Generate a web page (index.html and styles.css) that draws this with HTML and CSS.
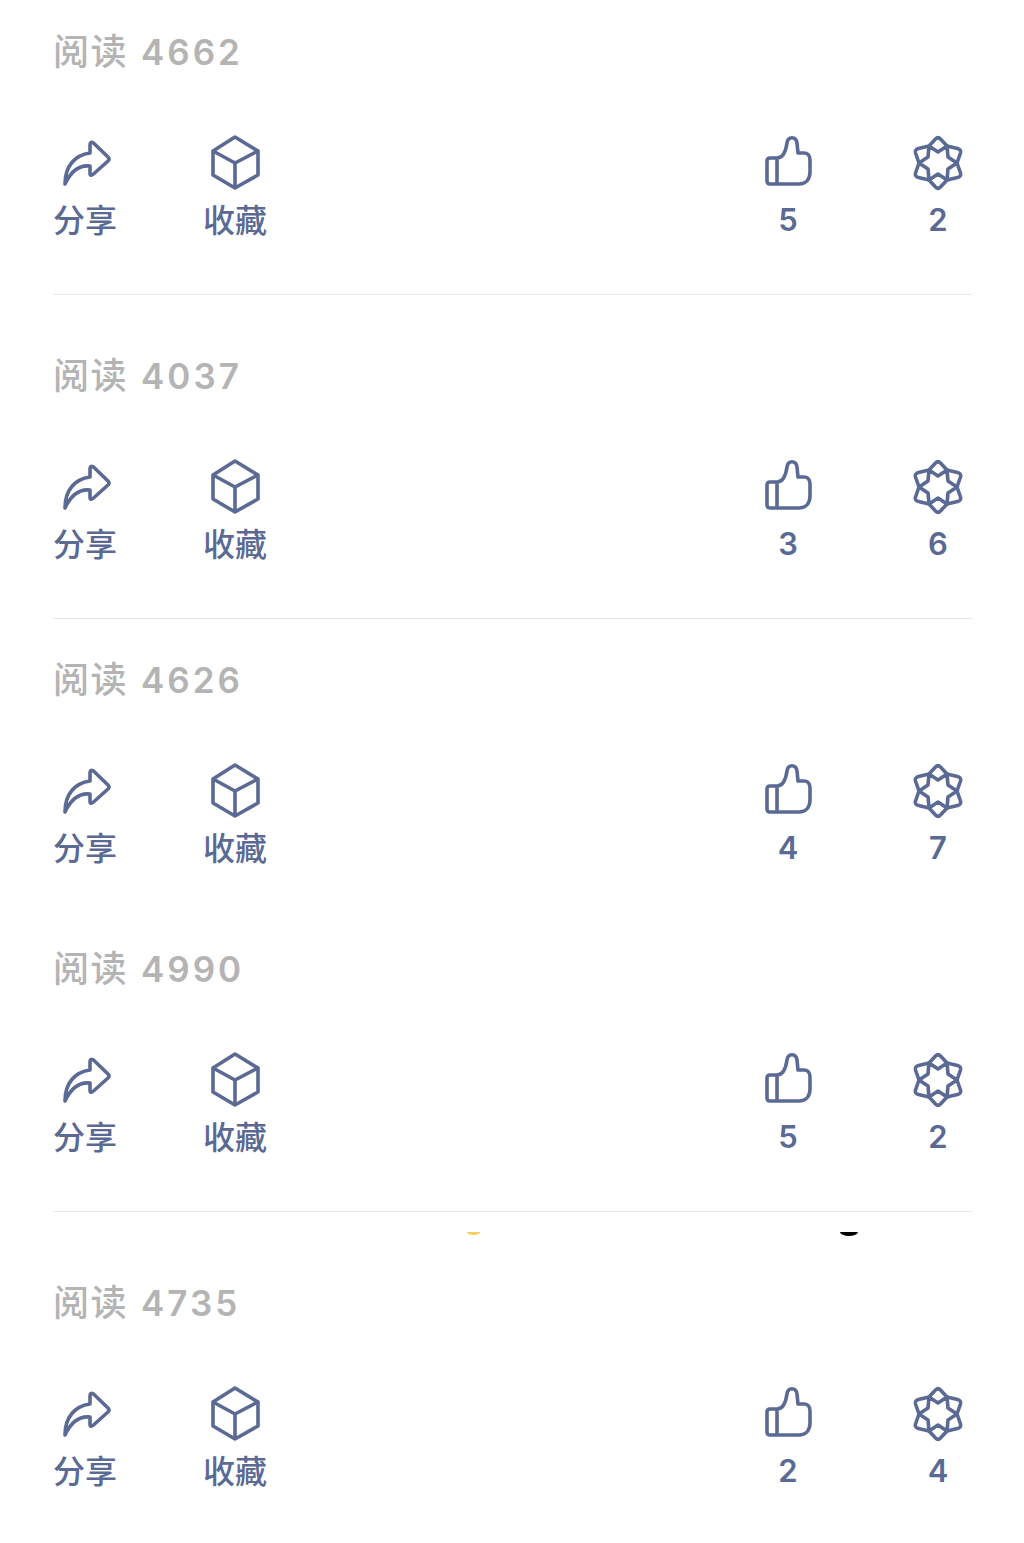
FILE: index.html

```html
<!DOCTYPE html>
<html lang="zh-CN">
<head>
    <meta charset="UTF-8">
    <title>阅读列表</title>
    <link rel="stylesheet" href="styles.css">
</head>
<body>

<svg class="defs" width="0" height="0">
    <defs>
        <symbol id="i-share" viewBox="0 0 60 60">
            <path d="M10 51C10 33 20 22 35 20L35 12Q35 8 38.5 10L53 24Q55 26 53 28L38.5 41Q35 44 35 40L35 33C25 32 16 38 10 51Z"/>
        </symbol>
        <symbol id="i-box" viewBox="0 0 60 60">
            <path d="M30 4L53 18V42L30 55L8 42V18ZM8 18L30 30L53 18M30 30V55"/>
        </symbol>
        <symbol id="i-thumb" viewBox="0 0 60 60">
            <path d="M19 25H12Q9 25 9 28V48Q9 51 12 51H41C48 51 52 46 52 39V27C52 22 49 20 46 20H40L39 10C38 3 30 3 29 10C28 17 26 25 19 25ZM19 25V51"/>
        </symbol>
        <symbol id="i-star" viewBox="0 0 60 60">
            <path d="M27.5 6Q30 3.5 32.5 6L39 13L49.5 15.5Q53.5 16.5 52.5 20L49 30L52.5 40Q53.5 43.5 49.5 44.5L39 47L32.5 54Q30 56.5 27.5 54L21 47L10.5 44.5Q6.5 43.5 7.5 40L11 30L7.5 20Q6.5 16.5 10.5 15.5L21 13Z"/>
            <path d="M21 13L30 19L39 13L40 24L49 30L40 36L39 47L30 41L21 47L20 36L11 30L20 24Z"/>
        </symbol>
    </defs>
</svg>

<div class="post post-first">
    <p class="views">阅读<span class="count">4662</span></p>
    <div class="actions">
        <div class="action"><svg class="icon"><use href="#i-share"/></svg><span>分享</span></div>
        <div class="action"><svg class="icon"><use href="#i-box"/></svg><span>收藏</span></div>
        <div class="action action-push"><svg class="icon"><use href="#i-thumb"/></svg><span class="num">5</span></div>
        <div class="action"><svg class="icon"><use href="#i-star"/></svg><span class="num">2</span></div>
    </div>
</div>

<div class="post post-second">
    <p class="views">阅读<span class="count">4037</span></p>
    <div class="actions">
        <div class="action"><svg class="icon"><use href="#i-share"/></svg><span>分享</span></div>
        <div class="action"><svg class="icon"><use href="#i-box"/></svg><span>收藏</span></div>
        <div class="action action-push"><svg class="icon"><use href="#i-thumb"/></svg><span class="num">3</span></div>
        <div class="action"><svg class="icon"><use href="#i-star"/></svg><span class="num">6</span></div>
    </div>
</div>

<div class="post post-third">
    <p class="views">阅读<span class="count">4626</span></p>
    <div class="actions">
        <div class="action"><svg class="icon"><use href="#i-share"/></svg><span>分享</span></div>
        <div class="action"><svg class="icon"><use href="#i-box"/></svg><span>收藏</span></div>
        <div class="action action-push"><svg class="icon"><use href="#i-thumb"/></svg><span class="num">4</span></div>
        <div class="action"><svg class="icon"><use href="#i-star"/></svg><span class="num">7</span></div>
    </div>
</div>

<div class="post post-fourth">
    <p class="views">阅读<span class="count">4990</span></p>
    <div class="actions">
        <div class="action"><svg class="icon"><use href="#i-share"/></svg><span>分享</span></div>
        <div class="action"><svg class="icon"><use href="#i-box"/></svg><span>收藏</span></div>
        <div class="action action-push"><svg class="icon"><use href="#i-thumb"/></svg><span class="num">5</span></div>
        <div class="action"><svg class="icon"><use href="#i-star"/></svg><span class="num">2</span></div>
    </div>
    <!-- bits of the next card peeking through -->
    <span class="peek peek-yellow"></span>
    <span class="peek peek-black"></span>
</div>

<div class="post post-last">
    <p class="views">阅读<span class="count">4735</span></p>
    <div class="actions">
        <div class="action"><svg class="icon"><use href="#i-share"/></svg><span>分享</span></div>
        <div class="action"><svg class="icon"><use href="#i-box"/></svg><span>收藏</span></div>
        <div class="action action-push"><svg class="icon"><use href="#i-thumb"/></svg><span class="num">2</span></div>
        <div class="action"><svg class="icon"><use href="#i-star"/></svg><span class="num">4</span></div>
    </div>
</div>

</body>
</html>
```

FILE: styles.css

```css
body {
    margin: 0;
    padding: 0 52px 0 53px;
    background-color: #fff;
    font-family: "Noto Sans CJK SC", "Liberation Sans", sans-serif;
}

.defs {
    display: block;
    height: 0;
}

.post {
    position: relative;
}

.post-first {
    padding-top: 29px;
    height: 265px;
    border-bottom: 1px solid #e9e9ec;
}

.post-second {
    padding-top: 58px;
    height: 265px;
    border-bottom: 1px solid #e9e9ec;
}

.post-third {
    padding-top: 38px;
    height: 254px;
}

.post-fourth {
    padding-top: 35px;
    height: 265px;
    border-bottom: 1px solid #e9e9ec;
}

.post-last {
    padding-top: 68px;
    height: 243px;
}

.views {
    margin: 0;
    height: 40px;
    line-height: 40px;
    font-size: 36px;
    font-weight: 500;
    letter-spacing: 1.5px;
    color: #b4b4b4;
}

.count {
    margin-left: 13px;
    font-family: "Inter", sans-serif;
    font-size: 35px;
    font-weight: 600;
    letter-spacing: 3px;
}

.actions {
    display: flex;
    gap: 86px;
    margin-top: 64px;
    padding: 0 2px 0 0;
}

.action {
    display: flex;
    flex-direction: column;
    align-items: center;
    width: 64px;
    font-size: 32px;
    font-weight: 500;
    line-height: 44px;
    color: #5a6a94;
}

.action-push {
    margin-left: auto;
}

.icon {
    width: 60px;
    height: 60px;
    margin-bottom: 3px;
    fill: none;
    stroke: #5a6a94;
    stroke-width: 3.6;
    stroke-linejoin: round;
    stroke-linecap: round;
}

.num {
    padding-top: 2px;
    font-family: "Inter", sans-serif;
    font-size: 31px;
    font-weight: 600;
}

.peek {
    position: absolute;
    top: 321px;
    height: 4px;
}

.peek-yellow {
    left: 414px;
    width: 13px;
    height: 3px;
    border-radius: 0 0 7px 7px / 0 0 3px 3px;
    background-color: #f5cf5e;
}

.peek-black {
    left: 787px;
    width: 18px;
    border-radius: 0 0 9px 9px / 0 0 4px 4px;
    background-color: #000;
}
```
